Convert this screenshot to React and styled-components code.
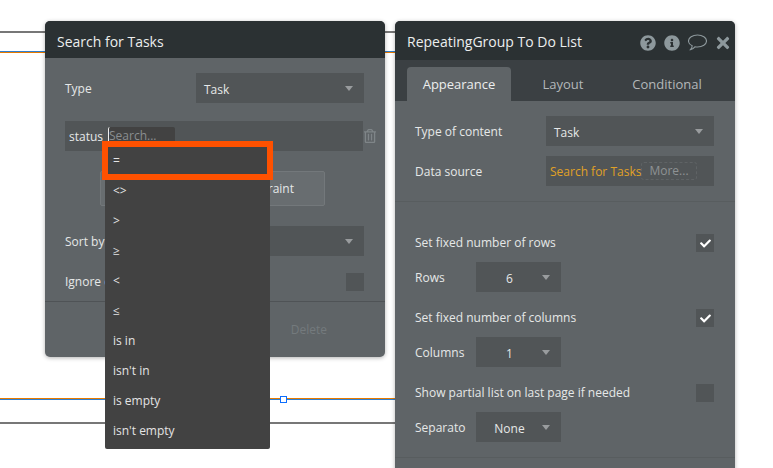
import React from "react";
import styled, { createGlobalStyle } from "styled-components";
import { FaQuestionCircle, FaInfoCircle, FaTimes, FaCheck, FaRegTrashAlt } from "react-icons/fa";

const Global = createGlobalStyle`
  html, body { margin: 0; padding: 0; background: #fff; }
  body { font-family: "Open Sans", "Noto Sans", sans-serif; font-size: 12px; color: #e8eaea; }
`;

const Canvas = styled.div`
  position: relative;
  width: 773px;
  height: 468px;
  overflow: hidden;
  background: #fff;
  display: flex;
  align-items: flex-start;
  gap: 10px;
  padding: 21px 0 0 45px;
  box-sizing: border-box;
`;

const Wire = styled.div`
  position: absolute;
  left: 0;
  width: 400px;
  top: ${p => p.$top}px;
  height: 2px;
  box-sizing: border-box;
  border-top: 1px solid ${p => p.$upper};
  border-bottom: 1px solid ${p => p.$lower};
`;

const Handle = styled.div`
  position: absolute;
  left: 280px;
  top: 396px;
  width: 7px;
  height: 7px;
  box-sizing: border-box;
  background: #fff;
  border: 1px solid #0d6efd;
`;

const Panel = styled.section`
  position: relative;
  width: 340px;
  flex: none;
  background: #5f6467;
  border-radius: 5px;
  box-shadow: 0 1px 4px rgba(0, 0, 0, 0.3);
  overflow: hidden;
  height: ${p => p.$height}px;
`;

const Header = styled.header`
  height: ${p => p.$height}px;
  background: #2b3133;
  display: flex;
  align-items: center;
  justify-content: space-between;
  padding: ${p => p.$top}px 3px 0 12px;
  box-sizing: border-box;
  font-size: 14px;
  color: #eceeee;
`;

const IconBar = styled.div`
  display: flex;
  align-items: center;
  gap: 7px;
  margin-top: 2px;
  color: #8d989c;
  & svg { display: block; }
  & svg:nth-child(1), & svg:nth-child(2) { margin-right: 1px; }
`;

const CommentIcon = () => (
  <svg width="19" height="17" viewBox="0 0 19 17" fill="none" stroke="currentColor" strokeWidth="1.1">
    <path d="M9.5 1C14.5 1 18.5 3.6 18.5 7C18.5 10.4 14.5 13 9.5 13C8.6 13 7.7 12.9 6.9 12.8C5.8 14.2 4.2 15.4 2.5 15.6C3.6 14.4 4.2 13 4.2 11.8C2 10.7 .5 9 .5 7C.5 3.6 4.5 1 9.5 1Z" />
  </svg>
);

const Body = styled.div`
  padding: ${p => p.$pad};
  display: flex;
  flex-direction: column;
`;

const Row = styled.div`
  display: flex;
  align-items: center;
  justify-content: space-between;
  height: ${p => p.$h || 30}px;
  margin-top: ${p => p.$mt || 0}px;
`;

const LeftRow = styled(Row)`
  justify-content: flex-start;
  gap: 10px;
`;

const Label = styled.span`
  font-size: 12px;
  color: #e6e8e8;
  white-space: nowrap;
  width: ${p => (p.$w ? `${p.$w}px` : "auto")};
  margin-top: ${p => (p.$up ? "-2px" : "0")};
`;

const Select = styled.div`
  width: ${p => p.$w || 168}px;
  height: 30px;
  flex: none;
  background: #515557;
  display: flex;
  align-items: center;
  justify-content: ${p => (p.$center ? "center" : "flex-start")};
  padding: ${p => (p.$center ? "2px 18px 0 0" : "2px 0 0 8px")};
  box-sizing: border-box;
  position: relative;
  font-size: 12px;
  color: #e6e8e8;
  &::after {
    content: "";
    position: absolute;
    right: 11px;
    top: 13px;
    border-left: 4.5px solid transparent;
    border-right: 4.5px solid transparent;
    border-top: 5px solid #999c9e;
  }
`;

const Constraint = styled.div`
  width: 298px;
  height: 30px;
  flex: none;
  background: #515557;
  display: flex;
  align-items: center;
  padding-left: 4px;
  box-sizing: border-box;
  gap: 5px;
`;

const ConstraintRow = styled.div`
  display: flex;
  align-items: center;
  margin: 18px -14px 0 0;
  color: #7f8588;
`;

const SearchInput = styled.div`
  width: 67px;
  height: 18px;
  background: #424242;
  border-radius: 2px;
  color: #8a8e90;
  font-size: 12px;
  line-height: 18px;
  border-left: 1px solid #eee;
  box-sizing: border-box;
`;

const AddButton = styled.div`
  width: 225px;
  height: 35px;
  margin: 20px 0 0 35px;
  border: 1px solid #73787b;
  border-radius: 2px;
  background: #686d70;
  box-sizing: border-box;
  display: flex;
  align-items: center;
  justify-content: flex-end;
  padding-right: 30px;
  font-size: 12px;
  color: #e6e8e8;
`;

const Check = styled.div`
  width: 18px;
  height: 18px;
  flex: none;
  background: #515557;
  color: #fff;
  display: flex;
  align-items: center;
  justify-content: center;
  font-size: 11px;
`;

const Divider = styled.div`
  height: 1px;
  background: ${p => p.$color || "#585d5f"};
  margin: ${p => p.$m};
`;

const Footer = styled.div`
  display: flex;
  justify-content: flex-end;
  padding: 19px 58px 0 0;
  font-size: 12px;
  color: #747a7d;
`;

const Tabs = styled.nav`
  height: 41px;
  background: #3b4043;
  display: flex;
  align-items: flex-end;
  padding-left: 12px;
`;

const Tab = styled.div`
  width: 104px;
  height: 34px;
  border-radius: 4px 4px 0 0;
  background: ${p => (p.$active ? "#5f6467" : "transparent")};
  color: ${p => (p.$active ? "#eceeee" : "#b4b8ba")};
  display: flex;
  align-items: center;
  justify-content: center;
  font-size: 13px;
`;

const DataSource = styled.div`
  width: 168px;
  height: 30px;
  background: #515557;
  display: flex;
  align-items: center;
  padding-left: 4px;
  box-sizing: border-box;
  white-space: nowrap;
`;

const Orange = styled.span`
  color: #e0a126;
`;

const More = styled.span`
  color: #8e9294;
  border: 1px dashed #5f6365;
  border-radius: 3px;
  padding: 0 7px;
  line-height: 16px;
`;

const Menu = styled.div`
  position: absolute;
  left: 105px;
  top: 145px;
  width: 165px;
  height: 304px;
  background: #424242;
  border-radius: 0 0 2px 2px;
`;

const MenuItem = styled.div`
  height: 30px;
  display: flex;
  align-items: center;
  padding-left: 8px;
  font-size: 12px;
  color: #e4e4e4;
`;

const Highlight = styled.div`
  position: absolute;
  left: 102px;
  top: 141px;
  width: 171px;
  height: 39px;
  box-sizing: border-box;
  border: 6px solid #ff5100;
`;

const ops = ["=", "<>", ">", "≥", "<", "≤", "is in", "isn't in", "is empty", "isn't empty"];

export default function App() {
  return (
    <Canvas>
      <Global />
      <Wire $top={31} $upper="#777" $lower="#777" />
      <Wire $top={51} $upper="#2f7fd0" $lower="#e67a00" />
      <Wire $top={398} $upper="#e67a00" $lower="#2f7fd0" />
      <Wire $top={422} $upper="#777" $lower="#777" />
      <Handle />

      <Panel $height={336}>
        <Header $height={37} $top={4}>Search for Tasks</Header>
        <Body $pad="15px 21px 0 20px">
          <Row>
            <Label>Type</Label>
            <Select>Task</Select>
          </Row>
          <ConstraintRow>
            <Constraint>
              <Label>status</Label>
              <SearchInput>Search...</SearchInput>
            </Constraint>
            <FaRegTrashAlt size={14} />
          </ConstraintRow>
          <AddButton>Add a new constraint</AddButton>
          <Row $mt={20}>
            <Label>Sort by</Label>
            <Select />
          </Row>
          <Row $h={18} $mt={17}>
            <Label $up>Ignore empty constraints</Label>
            <Check />
          </Row>
        </Body>
        <Divider $m="10px 0 0" $color="#4f5356" />
        <Footer>Delete</Footer>
      </Panel>

      <Panel $height={470}>
        <Header $height={39} $top={2}>
          RepeatingGroup To Do List
          <IconBar>
            <FaQuestionCircle size={16} />
            <FaInfoCircle size={16} />
            <CommentIcon />
            <FaTimes size={18} />
          </IconBar>
        </Header>
        <Tabs>
          <Tab $active>Appearance</Tab>
          <Tab>Layout</Tab>
          <Tab>Conditional</Tab>
        </Tabs>
        <Body $pad="15px 21px 0 20px">
          <Row>
            <Label>Type of content</Label>
            <Select>Task</Select>
          </Row>
          <Row $mt={10}>
            <Label>Data source</Label>
            <DataSource>
              <Orange>Search for Tasks</Orange>
              <More>More...</More>
            </DataSource>
          </Row>
        </Body>
        <Divider $m="15px 0 0" />
        <Body $pad="32px 21px 0 20px">
          <Row $h={18}>
            <Label $up>Set fixed number of rows</Label>
            <Check><FaCheck /></Check>
          </Row>
          <LeftRow $mt={10}>
            <Label $w={51}>Rows</Label>
            <Select $w={85} $center>6</Select>
          </LeftRow>
          <Row $h={18} $mt={17}>
            <Label $up>Set fixed number of columns</Label>
            <Check><FaCheck /></Check>
          </Row>
          <LeftRow $mt={10}>
            <Label $w={51}>Columns</Label>
            <Select $w={85} $center>1</Select>
          </LeftRow>
          <Row $h={18} $mt={17}>
            <Label $up>Show partial list on last page if needed</Label>
            <Check />
          </Row>
          <LeftRow $mt={10}>
            <Label $w={51}>Separato</Label>
            <Select $w={85} $center>None</Select>
          </LeftRow>
        </Body>
        <Divider $m="15px 0 0" />
      </Panel>

      <Menu>
        {ops.map(o => <MenuItem key={o}>{o}</MenuItem>)}
      </Menu>
      <Highlight />
    </Canvas>
  );
}
